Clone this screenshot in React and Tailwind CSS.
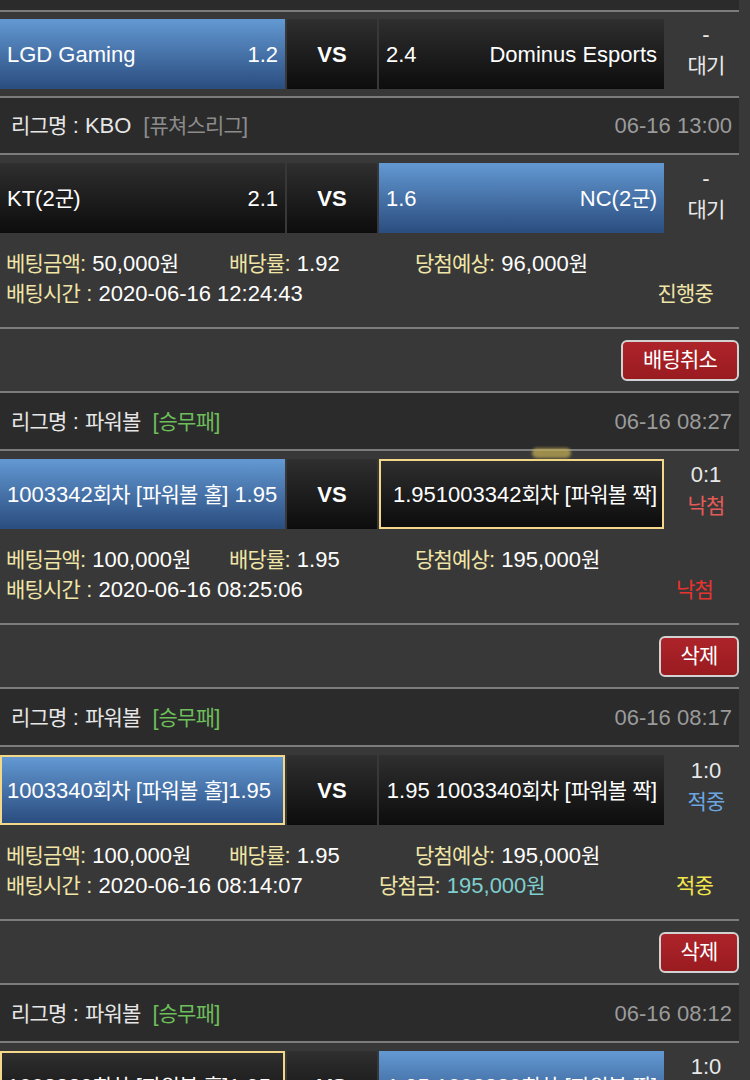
import React from 'react';

// Hangul runs get their own size/tracking so they fill like the original Korean font
const HANGUL = /([\uAC00-\uD7A3]+)/;
const ko = (s) =>
  s.split(HANGUL).map((p, i) =>
    HANGUL.test(p) ? (
      <span key={i} className="text-[21px] tracking-[-0.8px]">{p}</span>
    ) : (
      p
    )
  );

const Line = () => <div className="h-[2px] bg-[#7c7c7c]" />;

const LeagueHeader = ({ name, tag, tagColor, time, h = 'h-[56px]' }) => (
  <div className={`${h} bg-[#2b2b2b] flex items-center justify-between pl-[11px] pr-[7px]`}>
    <div className="text-[#e6e6e6]">
      {ko(`리그명 : ${name}`)}
      <span className={`ml-[12px] ${tagColor}`}>{ko(tag)}</span>
    </div>
    <div className="text-[#9a9a9a]">{time}</div>
  </div>
);

const Box = ({ side, blue, border, name, odds }) => {
  const bg = blue
    ? 'bg-linear-to-b from-[#6399d3] to-[#2b4d7f]'
    : 'bg-linear-to-b from-[#2f2f2f] to-[#0d0d0d]';
  const bd = border ? 'border-2 border-[#f2d888] px-[5px]' : 'px-[7px]';
  return (
    <div className={`w-[285px] h-full ${bg} ${bd} flex items-center justify-between whitespace-nowrap overflow-hidden text-white`}>
      {side === 'left' ? (
        <>
          <span>{ko(name)}</span>
          <span>{odds}</span>
        </>
      ) : (
        <>
          <span>{odds}</span>
          <span>{ko(name)}</span>
        </>
      )}
    </div>
  );
};

const MatchRow = ({ m, pt = 'pt-[8px]', pb = '' }) => (
  <div className={`${pt} ${pb}`}>
    <div className="flex h-[70px] gap-[2px]">
      <Box side="left" {...m.left} />
      <div className="w-[90px] h-full bg-linear-to-b from-[#2f2f2f] to-[#0d0d0d] flex items-center justify-center text-white font-bold">
        VS
      </div>
      <Box side="right" {...m.right} />
      <div className="flex-1 pl-[7px] flex flex-col items-center leading-[31px]">
        <span className="text-[#e8e8e8]">{m.score}</span>
        <span className={m.resultColor}>{ko(m.result)}</span>
      </div>
    </div>
  </div>
);

const Label = ({ children }) => <span className="text-[#f0e5a6]">{ko(children)}</span>;

const Info = ({ amount, rate, expect, time, win, status, statusColor }) => (
  <div className="pt-[16px] pb-[18px] leading-[30px] text-white">
    <div className="flex pl-[6px]">
      <span className="w-[223px]">
        <Label>베팅금액:</Label> {ko(amount)}
      </span>
      <span className="w-[186px]">
        <Label>배당률:</Label> {rate}
      </span>
      <span>
        <Label>당첨예상:</Label> {ko(expect)}
      </span>
    </div>
    <div className="flex pl-[6px] pr-[26px]">
      <span className="w-[373px]">
        <Label>배팅시간 :</Label> {time}
      </span>
      {win && (
        <span>
          <Label>당첨금:</Label> <span className="text-[#7fcfcf]">{ko(win)}</span>
        </span>
      )}
      <span className={`ml-auto ${statusColor}`}>{ko(status)}</span>
    </div>
  </div>
);

const ActionRow = ({ label, w }) => (
  <div className="h-[62px] flex items-center justify-end">
    <button className={`${w} h-[41px] rounded-[6px] border-2 border-[#d2d2d2] bg-linear-to-b from-[#ad242a] to-[#991b20] text-white flex items-center justify-center`}>
      {ko(label)}
    </button>
  </div>
);

const PB = 'text-[#6dbd5a]';

const pbMatch = (leftBlue, leftBorder, rightBlue, rightBorder, leftText, rightText, score, result, resultColor) => ({
  left: { blue: leftBlue, border: leftBorder, name: leftText, odds: '' },
  right: { blue: rightBlue, border: rightBorder, name: rightText, odds: '' },
  score,
  result,
  resultColor,
});

export default function App() {
  const lgd = {
    left: { blue: true, name: 'LGD Gaming', odds: '1.2' },
    right: { blue: false, name: 'Dominus Esports', odds: '2.4' },
    score: '-',
    result: '대기',
    resultColor: 'text-[#e8e8e8]',
  };
  const kt = {
    left: { blue: false, name: 'KT(2군)', odds: '2.1' },
    right: { blue: true, name: 'NC(2군)', odds: '1.6' },
    score: '-',
    result: '대기',
    resultColor: 'text-[#e8e8e8]',
  };
  const m42 = pbMatch(true, false, false, true, '1003342회차 [파워볼 홀] 1.95', '1.951003342회차 [파워볼 짝]', '0:1', '낙첨', 'text-[#e35b57]');
  const m40 = pbMatch(true, true, false, false, '1003340회차 [파워볼 홀]1.95', '1.95 1003340회차 [파워볼 짝]', '1:0', '적중', 'text-[#6aa7e2]');
  const m39 = pbMatch(false, true, true, false, '1003339회차 [파워볼 홀]1.95', '1.95 1003339회차 [파워볼 짝]', '1:0', '낙첨', 'text-[#e35b57]');

  return (
    <div className="relative w-[750px] h-[1080px] overflow-hidden bg-[#383838] text-[22px] font-['Liberation_Sans','Noto_Sans_CJK_KR',sans-serif]">
      <div className="w-[739px]">
        {/* bet 1 (top cut off) */}
        <div className="h-[10px] bg-[#2b2b2b]" />
        <Line />
        <MatchRow m={lgd} pt="pt-[7px]" pb="pb-[7px]" />
        <Line />
        <LeagueHeader name="KBO" tag="[퓨쳐스리그]" tagColor="text-[#8c8c8c]" time="06-16 13:00" h="h-[55px]" />
        <Line />
        <MatchRow m={kt} />
        <Info amount="50,000원" rate="1.92" expect="96,000원" time="2020-06-16 12:24:43" status="진행중" statusColor="text-[#f0e5a6]" />
        <Line />
        <ActionRow label="배팅취소" w="w-[118px]" />
        <Line />

        {/* bet 2 */}
        <LeagueHeader name="파워볼" tag="[승무패]" tagColor={PB} time="06-16 08:27" />
        <Line />
        <MatchRow m={m42} />
        <Info amount="100,000원" rate="1.95" expect="195,000원" time="2020-06-16 08:25:06" status="낙첨" statusColor="text-[#e8332f]" />
        <Line />
        <ActionRow label="삭제" w="w-[80px]" />
        <Line />

        {/* bet 3 */}
        <LeagueHeader name="파워볼" tag="[승무패]" tagColor={PB} time="06-16 08:17" />
        <Line />
        <MatchRow m={m40} />
        <Info amount="100,000원" rate="1.95" expect="195,000원" time="2020-06-16 08:14:07" win="195,000원" status="적중" statusColor="text-[#f2e64c]" />
        <Line />
        <ActionRow label="삭제" w="w-[80px]" />
        <Line />

        {/* bet 4 */}
        <LeagueHeader name="파워볼" tag="[승무패]" tagColor={PB} time="06-16 08:12" />
        <Line />
        <MatchRow m={m39} />
      </div>

      {/* small blurred highlight over the divider */}
      <div className="absolute left-[532px] top-[448px] w-[39px] h-[10px] rounded-full bg-[#c9b257]/70 blur-[1.5px]" />
    </div>
  );
}
